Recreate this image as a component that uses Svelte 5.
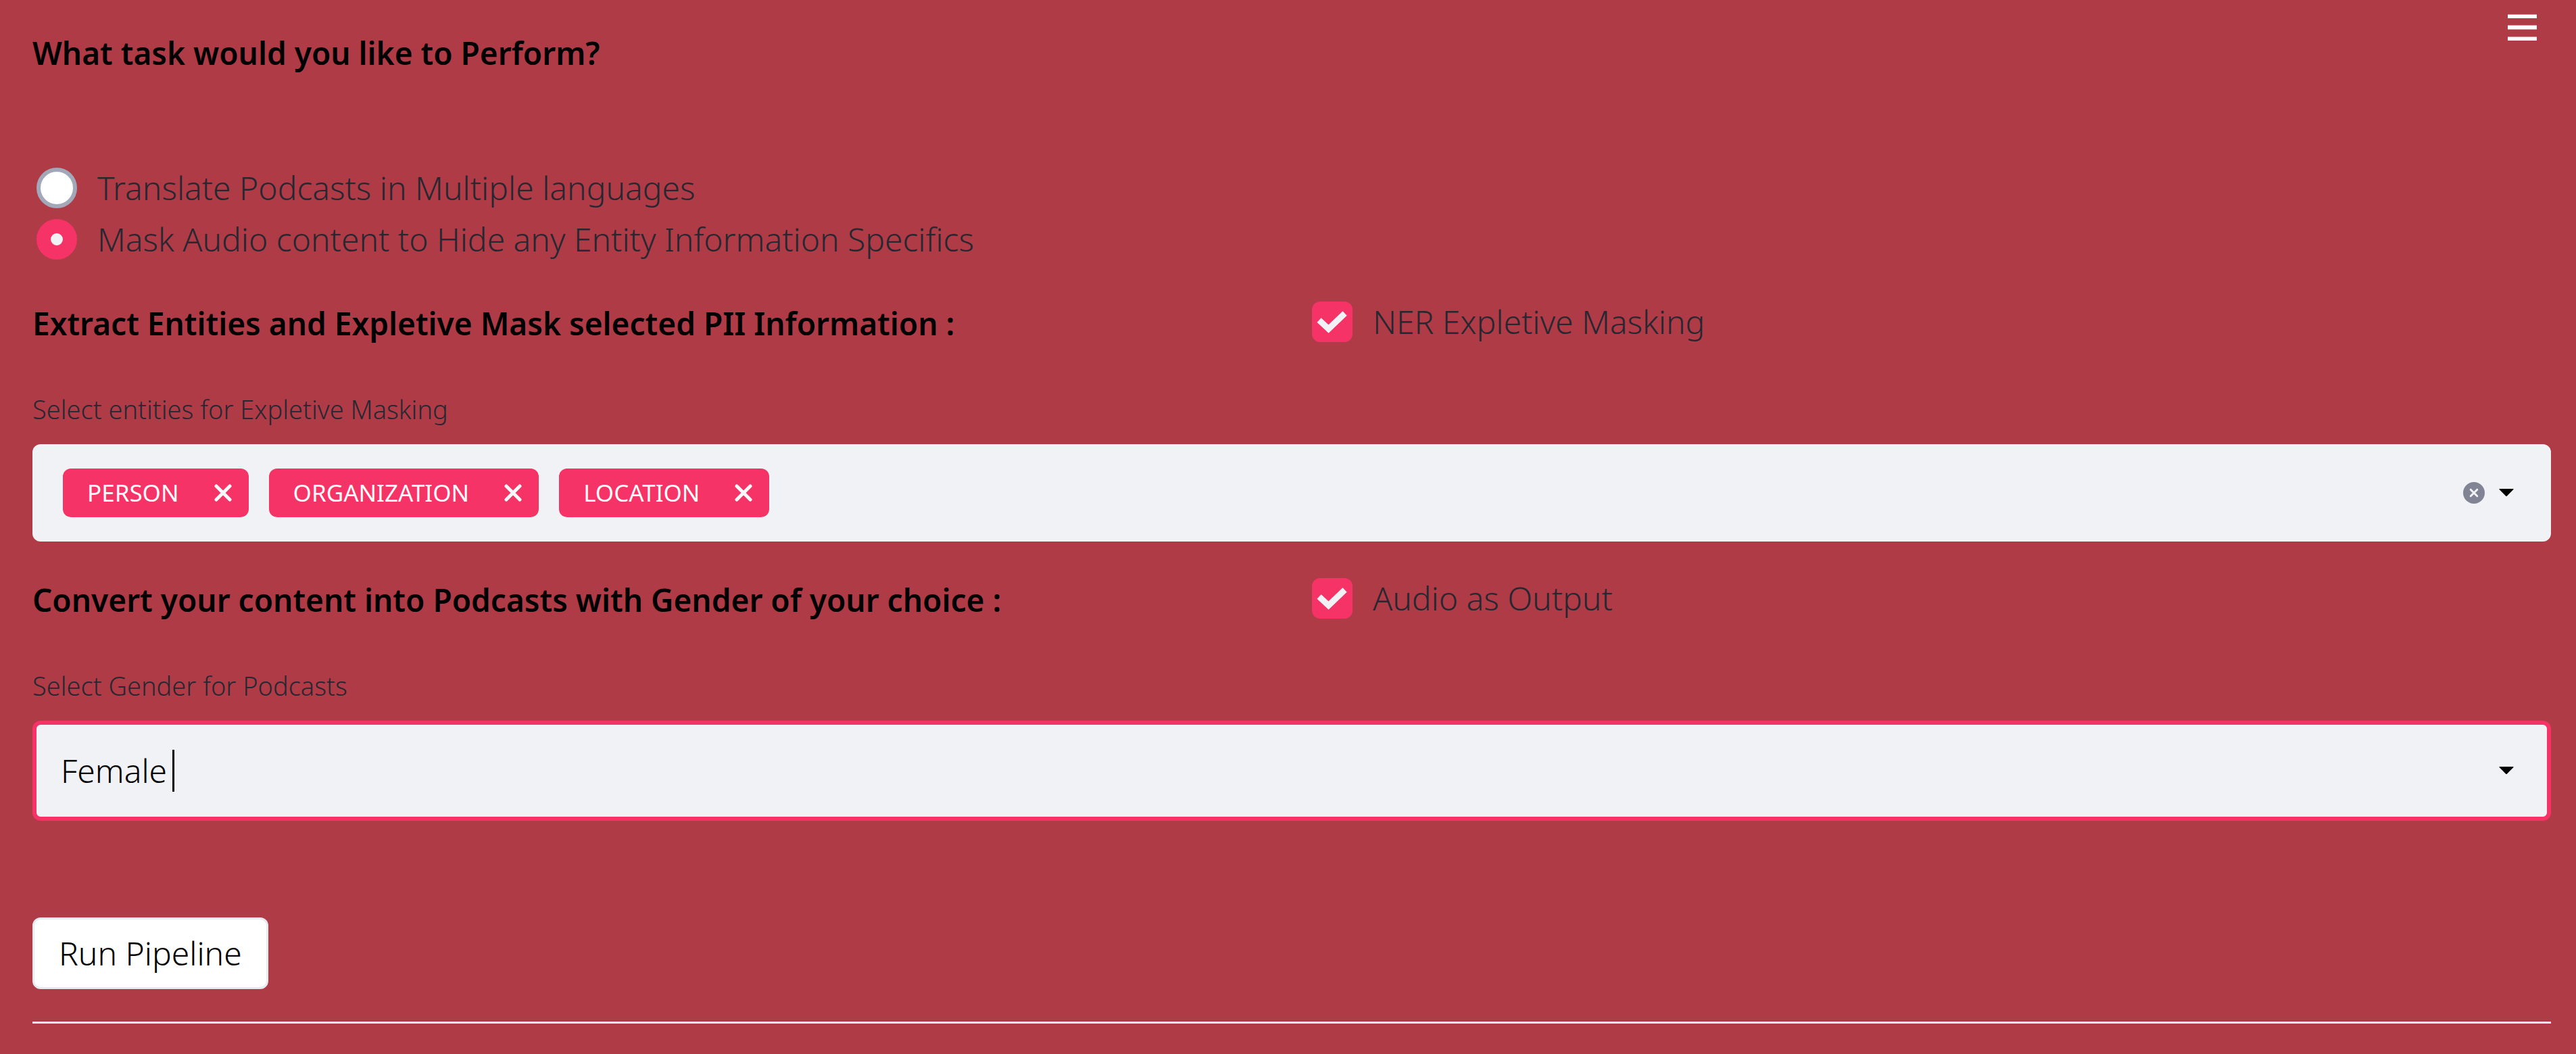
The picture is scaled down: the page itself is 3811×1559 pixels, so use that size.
<script>
  const tasks = [
    'Translate Podcasts in Multiple languages',
    'Mask Audio content to Hide any Entity Information Specifics'
  ];
  const allEntities = ['PERSON', 'ORGANIZATION', 'LOCATION'];

  let task = $state(tasks[1]);
  let entities = $state([...allEntities]);
  let masking = $state(true);
  let audio = $state(true);
  let gender = $state('Female');

  function remove(name) {
    entities = entities.filter((entity) => entity !== name);
  }
</script>

{#snippet caret()}
  <svg class="caret" viewBox="0 0 22 12" aria-hidden="true">
    <path d="M1 0H21Q22 0 21.4 1L12 10.6Q11 11.6 10 10.6L.6 1Q0 0 1 0Z" />
  </svg>
{/snippet}

{#snippet tick()}
  <svg class="tick" viewBox="0 0 60 60" aria-hidden="true">
    <path d="M10.5 27.5L24.5 40.5L48.5 17.5" />
  </svg>
{/snippet}

<main>
  <header>
    <h3>What task would you like to Perform?</h3>
    <button class="menu" type="button" aria-label="Menu">
      <svg viewBox="0 0 43 39" aria-hidden="true">
        <path d="M0 .5H43V6H0ZM0 16.5H43V22.5H0ZM0 33.5H43V39H0Z" />
      </svg>
    </button>
  </header>

  <div class="options" role="radiogroup" aria-label="Task">
    {#each tasks as name}
      <label class="choice">
        <input type="radio" name="task" value={name} bind:group={task} />
        <span>{name}</span>
      </label>
    {/each}
  </div>

  <section>
    <div class="columns">
      <h3>Extract Entities and Expletive Mask selected PII Information :</h3>
      <label class="choice">
        <span class="box">
          <input type="checkbox" bind:checked={masking} />
          {#if masking}{@render tick()}{/if}
        </span>
        <span>NER Expletive Masking</span>
      </label>
    </div>
    <label class="caption" for="entities">Select entities for Expletive Masking</label>
    <div class="field tags">
      {#each entities as entity}
        <span class="tag">
          {entity}
          <button type="button" aria-label="Remove {entity}" onclick={() => remove(entity)}>
            <svg class="cross" viewBox="0 0 26 26" aria-hidden="true">
              <path d="M3 3L23 23M23 3L3 23" />
            </svg>
          </button>
        </span>
      {/each}
      <input id="entities" type="text" />
      <button type="button" aria-label="Clear all" onclick={() => (entities = [])}>
        <svg class="clear" viewBox="0 0 32 32" aria-hidden="true">
          <circle cx="16" cy="16" r="16" />
          <path d="M11.2 11.2L20.8 20.8M20.8 11.2L11.2 20.8" />
        </svg>
      </button>
      <button type="button" aria-label="Open entities" onclick={() => (entities = [...allEntities])}>
        {@render caret()}
      </button>
    </div>
  </section>

  <section>
    <div class="columns">
      <h3>Convert your content into Podcasts with Gender of your choice :</h3>
      <label class="choice">
        <span class="box">
          <input type="checkbox" bind:checked={audio} />
          {#if audio}{@render tick()}{/if}
        </span>
        <span>Audio as Output</span>
      </label>
    </div>
    <label class="caption" for="gender">Select Gender for Podcasts</label>
    <div class="field focused">
      <input id="gender" class="value" type="text" bind:value={gender} />
      <span class="cursor"></span>
      <button type="button" aria-label="Open genders">{@render caret()}</button>
    </div>
  </section>

  <button class="run" type="button">Run Pipeline</button>
  <hr />
</main>

<style>
  :global(body) {
    background: #af3b47;
  }

  main {
    padding: 21px 37px 44px 48px;
    color: #262730;
    font: 300 48px/60px 'Noto Sans', 'Open Sans', sans-serif;
  }

  main,
  main * {
    box-sizing: border-box;
  }

  button,
  input {
    margin: 0;
    padding: 0;
    border: 0;
    outline: 0;
    background: none;
    color: inherit;
    font: inherit;
  }

  svg {
    display: block;
  }

  h3 {
    margin: 0;
    color: #000;
    font-size: 46px;
    font-weight: 600;
    line-height: 64px;
  }

  header {
    display: flex;
    justify-content: space-between;
    align-items: flex-start;
    padding-right: 21px;
  }

  header h3 {
    padding-top: 25px;
  }

  .menu svg {
    width: 43px;
    height: 39px;
    fill: #fff;
  }

  .options {
    display: flex;
    flex-direction: column;
    align-items: flex-start;
    gap: 16px;
    margin-top: 138px;
    padding-left: 6px;
  }

  .choice {
    display: flex;
    align-items: flex-start;
    gap: 30px;
  }

  .choice input {
    flex: none;
    width: 60px;
    height: 60px;
    appearance: none;
  }

  input[type='radio'] {
    border: 6px solid #a3a8b8;
    border-radius: 50%;
    background: #fff;
  }

  input[type='radio']:checked {
    border: 21px solid #f63366;
    background: #f0f2f6;
  }

  .box {
    display: grid;
  }

  .box > :global(*) {
    grid-area: 1 / 1;
  }

  input[type='checkbox'] {
    border: 6px solid #a3a8b8;
    border-radius: 12px;
    background: #fff;
  }

  input[type='checkbox']:checked {
    border-color: #f63366;
    background: #f63366;
  }

  .tick {
    width: 60px;
    height: 60px;
    fill: none;
    stroke: #f0f2f6;
    stroke-width: 9px;
    pointer-events: none;
  }

  section {
    margin-top: 62px;
  }

  section + section {
    margin-top: 54px;
  }

  .columns {
    display: grid;
    grid-template-columns: 1fr 1fr;
    gap: 60px;
  }

  .caption {
    display: block;
    margin: 65px 0 22px;
    font-size: 38px;
  }

  .field {
    display: flex;
    align-items: center;
    min-height: 144px;
    padding: 0 55px 0 45px;
    border-radius: 12px;
    background: #f0f2f6;
    color: #000;
  }

  .tags > input {
    flex: 1;
    min-width: 0;
  }

  .tag {
    display: flex;
    align-items: center;
    gap: 52px;
    height: 72px;
    margin-right: 30px;
    padding: 0 25px 0 36px;
    border-radius: 12px;
    background: #f63366;
    color: #fafafa;
    font-size: 35px;
    font-weight: 400;
  }

  .cross {
    width: 26px;
    height: 26px;
    fill: none;
    stroke: #fafafa;
    stroke-width: 5px;
    stroke-linecap: round;
  }

  .clear {
    width: 32px;
    height: 32px;
    margin-right: 21px;
    fill: #808495;
    stroke: none;
  }

  .clear path {
    stroke: #f0f2f6;
    stroke-width: 3px;
    stroke-linecap: round;
  }

  .caret {
    width: 22px;
    height: 12px;
    fill: #000;
  }

  .focused {
    min-height: 148px;
    padding: 0 49px 0 36px;
    border: 6px solid #f63366;
  }

  .value {
    field-sizing: content;
  }

  .cursor {
    width: 3px;
    height: 62px;
    margin: 0 auto 0 8px;
    background: #000;
  }

  .run {
    display: block;
    height: 106px;
    margin-top: 143px;
    padding: 0 36px;
    border: 3px solid #e6eaf1;
    border-radius: 12px;
    background: #fff;
    color: #000;
  }

  hr {
    height: 3px;
    margin: 48px 0 0;
    border: 0;
    background: #e6eaf1;
  }
</style>
